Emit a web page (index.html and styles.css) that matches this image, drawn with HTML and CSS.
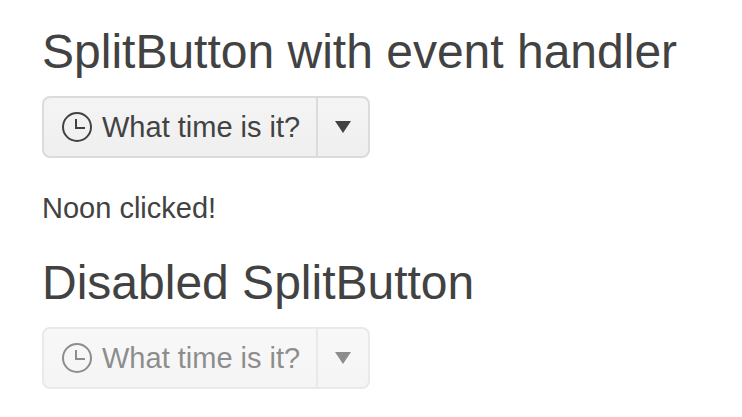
FILE: index.html
```html
<!DOCTYPE html>
<html lang="en">
<head>
<meta charset="utf-8">
<title>SplitButton</title>
<link rel="stylesheet" href="styles.css">
</head>
<body>
<main>
  <section>
    <h1>SplitButton with event handler</h1>
    <div class="split">
      <button type="button" class="main-btn">
        <svg class="clock" viewBox="0 0 30 30" aria-hidden="true"><circle cx="15" cy="15" r="14"/><path d="M14 7v9h9"/></svg>
        What time is it?
      </button>
      <button type="button" class="arrow-btn" aria-label="Open menu">
        <svg class="caret" viewBox="0 0 16 12" aria-hidden="true"><path d="M0 0h16L8 12z"/></svg>
      </button>
    </div>
    <p>Noon clicked!</p>
  </section>
  <section>
    <h1>Disabled SplitButton</h1>
    <div class="split disabled">
      <button type="button" class="main-btn" disabled>
        <svg class="clock" viewBox="0 0 30 30" aria-hidden="true"><circle cx="15" cy="15" r="14"/><path d="M14 7v9h9"/></svg>
        What time is it?
      </button>
      <button type="button" class="arrow-btn" aria-label="Open menu" disabled>
        <svg class="caret" viewBox="0 0 16 12" aria-hidden="true"><path d="M0 0h16L8 12z"/></svg>
      </button>
    </div>
  </section>
</main>
</body>
</html>
```
FILE: styles.css
```css
* { box-sizing: border-box; }
body {
  margin: 0;
  background: #fff;
  color: #424242;
  font-family: "Liberation Sans", Arial, sans-serif;
  font-size: 29px;
}
main { padding: 24px 42px; }
h1 {
  margin: 0 0 16px;
  font-size: 48px;
  font-weight: 400;
  line-height: 56px;
}
p {
  margin: 32px 0 29px;
  line-height: 36px;
}
.split { display: flex; }
.main-btn, .arrow-btn {
  display: flex;
  align-items: center;
  height: 62px;
  margin: 0;
  border: 2px solid #dbdbdb;
  background: linear-gradient(#f4f4f4, #efefef);
  color: inherit;
  font: inherit;
  white-space: nowrap;
}
.main-btn {
  gap: 10px;
  padding: 0 16px 0 18px;
  border-radius: 8px 0 0 8px;
}
.arrow-btn {
  padding: 0 17px;
  border-left: 0;
  border-radius: 0 8px 8px 0;
}
.clock {
  width: 30px;
  height: 30px;
  fill: none;
  stroke: currentColor;
  stroke-width: 2;
}
.caret {
  width: 16px;
  height: 12px;
  fill: currentColor;
}
.disabled { opacity: 0.6; }
```
